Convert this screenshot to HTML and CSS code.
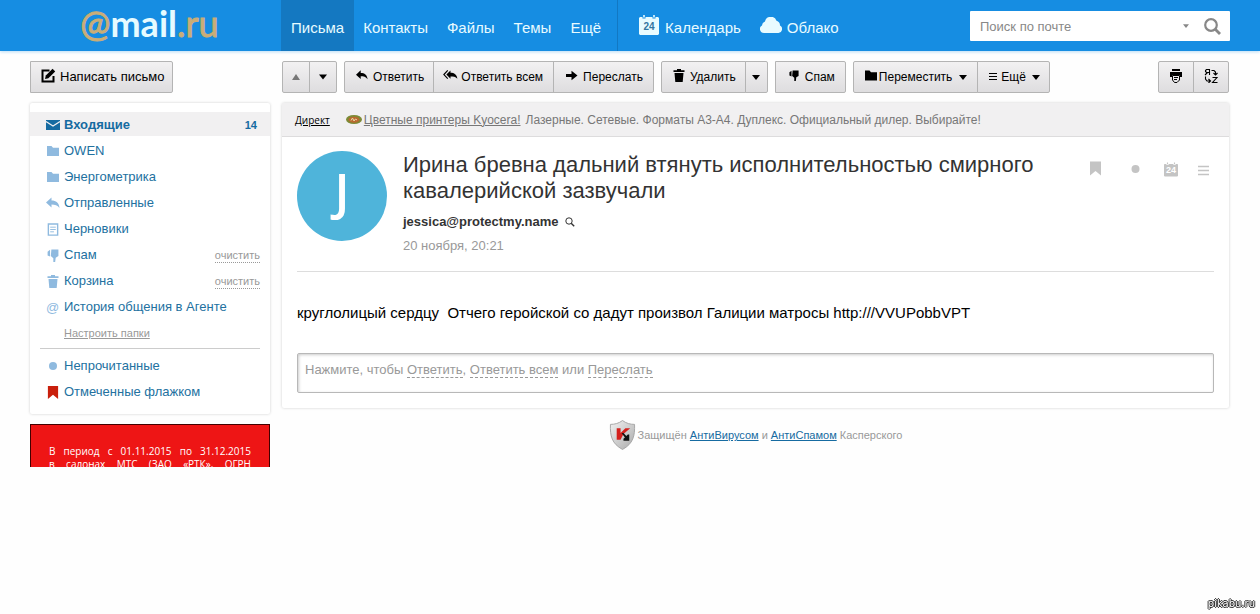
FILE: index.html
```
<!DOCTYPE html>
<html lang="ru">
<head>
<meta charset="utf-8">
<title>Почта Mail.Ru</title>
<link rel="stylesheet" href="styles.css">
</head>
<body>
<svg class="sprite" aria-hidden="true">
  <symbol id="compose" viewBox="0 0 16 16"><path d="M9.500 2.500H2.500v11h11V8" fill="none" stroke="currentColor" stroke-width="2"/><path d="M5 11l.8-3.400L12.600.8l2.600 2.600-6.800 6.800z" fill="currentColor"/></symbol>
  <symbol id="reply" viewBox="0 0 14 12"><path d="M0 5l5.500-5v3C10 3 13 5 13.500 10.500 11.500 7.500 9 7 5.500 7v3z" fill="currentColor"/></symbol>
  <symbol id="replyall" viewBox="0 0 16 12"><path d="M3.500 5L8 .5V3c4 0 7 2 7.500 6.500C13.500 7.200 11 7 8 7v2.500z" fill="currentColor"/><path d="M5 .5L.8 5 5 9.500" fill="none" stroke="currentColor" stroke-width="1.300"/></symbol>
  <symbol id="forward" viewBox="0 0 12 10"><path d="M0 3.500h5.500V.3L11.500 5 5.500 9.700V6.500H0z" fill="currentColor"/></symbol>
  <symbol id="trash" viewBox="0 0 12 13"><path d="M.5 1.300h3.500V0h4v1.300h3.500V3H.5zM1.500 4h9l-.8 9H2.300z" fill="currentColor"/></symbol>
  <symbol id="thumb" viewBox="0 0 12 12"><path d="M4.500.5h6.500v6L8.500 8 8 12H6.300V8.500L4 6.500z" fill="currentColor"/><path d="M3.300.8L1 2.500V6l2.300 1z" fill="currentColor"/></symbol>
  <symbol id="folder" viewBox="0 0 12 10"><path d="M0 0h4.500L6 1.800h6V10H0z" fill="currentColor"/></symbol>
  <symbol id="down" viewBox="0 0 8 5"><path d="M0 0h8L4 5z" fill="currentColor"/></symbol>
  <symbol id="up" viewBox="0 0 8 6"><path d="M0 6h8L4 0z" fill="currentColor"/></symbol>
  <symbol id="lines" viewBox="0 0 8 7"><path d="M0 .5h8M0 3.500h8M0 6.500h8" stroke="currentColor" stroke-width="1"/></symbol>
  <symbol id="printer" viewBox="0 0 14 14"><path d="M3 0h8v2H3zM1 3h12v5h-2V6H3v2H1z" fill="currentColor"/><path d="M3.500 6.500h7V11L8 13.500H5.500L3.500 11z" fill="none" stroke="currentColor"/><path d="M5 8.500h4M5 10.500h3" stroke="currentColor"/></symbol>
  <symbol id="translate" viewBox="0 0 14 14"><path d="M5.500 6V.5H2.500L1.500 1.500v1l1 1h3M3.500 3.500L1 6M7.500 1.500H10l1.500 1.500V6M9.500 4l2 2 2-2M1.500 7.500V10l1.500 2h3M4.500 10l2 2-2 2M8.500 8.500H13L8.500 13.500H13.500" fill="none" stroke="currentColor" stroke-width="1.100"/></symbol>
  <symbol id="calendar" viewBox="0 0 20 20"><path d="M1 2h2.500v1.500h3V2h7v1.500h3V2H19l1 1v16l-1 1H1l-1-1V3z" fill="currentColor"/><path d="M5 0v2.500M15 0v2.500" stroke="currentColor" stroke-width="1.600"/></symbol>
  <symbol id="cloud" viewBox="0 0 22 16"><path d="M4 16a4 4 0 0 1-2-7.500A4.500 4.500 0 0 1 5 4.500a6 6 0 0 1 11.500-.8A5 5 0 0 1 20 8.500 4 4 0 0 1 18.500 16z" fill="currentColor"/></symbol>
  <symbol id="search" viewBox="0 0 17 17"><circle cx="7" cy="7" r="5.800" fill="none" stroke="currentColor" stroke-width="2.200"/><path d="M11 11l5 5" stroke="currentColor" stroke-width="2.800"/></symbol>
  <symbol id="loupe" viewBox="0 0 10 10"><circle cx="4" cy="4" r="3.200" fill="none" stroke="currentColor"/><path d="M6.200 6.200L9.200 9.200" stroke="currentColor" stroke-width="1.400"/></symbol>
  <symbol id="mail" viewBox="0 0 14 10"><path d="M0 0h14v10H0z" fill="currentColor"/><path d="M0 1.500l7 4.500 7-4.500" fill="none" stroke="#f1f0f1" stroke-width="1.200"/></symbol>
  <symbol id="draft" viewBox="0 0 12 14"><path d="M1 1h10v12H1z" fill="none" stroke="currentColor" stroke-width="1.500"/><path d="M3 4.500h6M3 7h6M3 9.500h4" stroke="currentColor"/></symbol>
  <symbol id="flag" viewBox="0 0 11 14"><path d="M0 0h11v14L5.500 9.500 0 14z" fill="currentColor"/></symbol>
  <symbol id="dot" viewBox="0 0 8 8"><circle cx="4" cy="4" r="4" fill="currentColor"/></symbol>
  <symbol id="menu" viewBox="0 0 11 11"><path d="M0 1.500h11M0 5.500h11M0 9.500h11" stroke="currentColor" stroke-width="1.500"/></symbol>
</svg>

<header class="header">
  <a class="logo" href="#" aria-label="@mail.ru"><span class="logo-at">@</span><span class="logo-name">mail</span><span class="logo-zone">.ru</span></a>
  <nav class="nav">
    <a class="nav-link nav-active" href="#">Письма</a>
    <a class="nav-link" href="#">Контакты</a>
    <a class="nav-link" href="#">Файлы</a>
    <a class="nav-link" href="#">Темы</a>
    <a class="nav-link" href="#">Ещё</a>
  </nav>
  <nav class="nav nav-services">
    <a class="nav-link" href="#"><span class="cal"><svg class="i20"><use href="#calendar"/></svg><span class="cal-day">24</span></span>Календарь</a>
    <a class="nav-link" href="#"><svg class="i-cloud"><use href="#cloud"/></svg>Облако</a>
  </nav>
  <form class="search">
    <input class="search-input" type="text" placeholder="Поиск по почте" aria-label="Поиск по почте">
    <button class="search-btn" type="button" aria-label="Параметры"><svg class="i-caret"><use href="#down"/></svg></button>
    <button class="search-btn" type="button" aria-label="Найти"><svg class="i17"><use href="#search"/></svg></button>
  </form>
</header>

<div class="page">
  <aside class="side">
    <div class="group"><button class="btn btn-compose"><svg class="i16"><use href="#compose"/></svg>Написать письмо</button></div>
    <nav class="panel folders">
      <a class="folder folder-active" href="#"><svg class="fi"><use href="#mail"/></svg><span class="folder-name">Входящие</span><span class="count">14</span></a>
      <a class="folder" href="#"><svg class="fi fi-low"><use href="#folder"/></svg>OWEN</a>
      <a class="folder" href="#"><svg class="fi fi-low"><use href="#folder"/></svg>Энергометрика</a>
      <a class="folder" href="#"><svg class="fi"><use href="#reply"/></svg>Отправленные</a>
      <a class="folder" href="#"><svg class="fi"><use href="#draft"/></svg>Черновики</a>
      <div class="folder"><svg class="fi"><use href="#thumb"/></svg><a class="folder-name" href="#">Спам</a><button class="clear">очистить</button></div>
      <div class="folder"><svg class="fi"><use href="#trash"/></svg><a class="folder-name" href="#">Корзина</a><button class="clear">очистить</button></div>
      <a class="folder" href="#"><span class="fi agent">@</span>История общения в Агенте</a>
      <a class="setup" href="#">Настроить папки</a>
      <hr class="rule">
      <a class="folder" href="#"><svg class="fi fi-dot"><use href="#dot"/></svg>Непрочитанные</a>
      <a class="folder" href="#"><svg class="fi fi-flag"><use href="#flag"/></svg>Отмеченные флажком</a>
    </nav>
    <div class="banner"><p class="banner-text">В период с 01.11.2015 по 31.12.2015<br>в салонах МТС (ЗАО «РТК», ОГРН</p></div>
  </aside>

  <main class="main">
    <div class="toolbar">
      <div class="group">
        <button class="btn btn-step btn-off" aria-label="Предыдущее"><svg class="i-up"><use href="#up"/></svg></button>
        <button class="btn btn-step" aria-label="Следующее"><svg class="i-up"><use href="#down"/></svg></button>
      </div>
      <div class="group">
        <button class="btn"><svg class="i12"><use href="#reply"/></svg>Ответить</button>
        <button class="btn btn-all"><svg class="i-all"><use href="#replyall"/></svg>Ответить всем</button>
        <button class="btn btn-wide"><svg class="i12"><use href="#forward"/></svg>Переслать</button>
      </div>
      <div class="group">
        <button class="btn"><svg class="i13"><use href="#trash"/></svg>Удалить</button>
        <button class="btn btn-caret" aria-label="Ещё варианты удаления"><svg class="i-tri"><use href="#down"/></svg></button>
      </div>
      <div class="group">
        <button class="btn btn-wide"><svg class="i12"><use href="#thumb"/></svg>Спам</button>
      </div>
      <div class="group">
        <button class="btn btn-move"><svg class="i12"><use href="#folder"/></svg>Переместить<svg class="i-tri"><use href="#down"/></svg></button>
        <button class="btn btn-more"><svg class="i-lines"><use href="#lines"/></svg>Ещё<svg class="i-tri"><use href="#down"/></svg></button>
      </div>
      <div class="group group-end">
        <button class="btn btn-icon" aria-label="Печать"><svg class="i14"><use href="#printer"/></svg></button>
        <button class="btn btn-icon" aria-label="Перевести"><svg class="i14"><use href="#translate"/></svg></button>
      </div>
    </div>

    <article class="panel letter">
      <div class="direct">
        <a class="direct-label" href="#">Директ</a>
        <svg class="direct-icon" viewBox="0 0 16 9"><ellipse cx="8" cy="4.500" rx="8" ry="4.500" fill="#7d8a35"/><ellipse cx="8" cy="4.700" rx="5.500" ry="3" fill="#b9692f"/><path d="M5 5.500l1.500-2.500 1.500 3 1.500-2 1.500 1" stroke="#ead9a8" fill="none"/></svg>
        <a class="direct-link" href="#">Цветные принтеры Kyocera!</a>
        <span class="direct-text">Лазерные. Сетевые. Форматы А3-А4. Дуплекс. Официальный дилер. Выбирайте!</span>
      </div>
      <div class="content">
        <div class="head">
          <div class="avatar">J</div>
          <div class="meta">
            <h1 class="subject">Ирина бревна дальний втянуть исполнительностью смирного кавалерийской зазвучали</h1>
            <div class="from">jessica@protectmy.name<svg class="i-loupe"><use href="#loupe"/></svg></div>
            <div class="date">20 ноября, 20:21</div>
          </div>
          <div class="actions">
            <button class="act" aria-label="Флажок"><svg class="a-flag"><use href="#flag"/></svg></button>
            <button class="act act-dot" aria-label="Непрочитано"><svg class="a-dot"><use href="#dot"/></svg></button>
            <button class="act act-cal" aria-label="В календарь"><svg class="a-cal"><use href="#calendar"/></svg><span class="act-day">24</span></button>
            <button class="act" aria-label="Меню"><svg class="a-menu"><use href="#menu"/></svg></button>
          </div>
        </div>
        <p class="text">круглолицый сердцу&nbsp; Отчего геройской со дадут произвол Галиции матросы http:///VVUPobbVPT</p>
        <div class="answer">Нажмите, чтобы <a class="dash" href="#">Ответить</a>, <a class="dash" href="#">Ответить всем</a> или <a class="dash" href="#">Переслать</a></div>
      </div>
    </article>

    <footer class="foot">
      <svg class="shield" viewBox="0 0 28 32">
        <defs><linearGradient id="metal" x1="0" y1="0" x2="1" y2="1"><stop offset="0" stop-color="#f2f2f2"/><stop offset="1" stop-color="#aaa"/></linearGradient></defs>
        <path d="M14 1c4 3 8 4 12.500 4C27 17 25 25 14 31 3 25 1 17 1.500 5 6 5 10 4 14 1z" fill="url(#metal)" stroke="#a5a5a5"/>
        <path d="M8 9h4v5l5-5h5l-7 6-3 6H8z" fill="#d4201c"/>
        <path d="M13 14l2 0 3 3 1.500-1.500H21V22h-6v-2l1.500-1.500z" fill="#111"/>
      </svg>
      <span>Защищён <a class="foot-link" href="#">АнтиВирусом</a> и <a class="foot-link" href="#">АнтиСпамом</a> Касперского</span>
    </footer>
  </main>
</div>
<div class="mark">pikabu.ru</div>
</body>
</html>
```
FILE: styles.css
```
* { box-sizing: border-box; }
body { margin: 0; background: #fefefe; color: #333; font: 13px/16px "Liberation Sans", Arial, sans-serif; }
a { color: inherit; text-decoration: none; }
button { font: inherit; color: inherit; background: none; border: 0; padding: 0; cursor: pointer; }
svg { display: block; flex: none; }
.sprite { position: absolute; width: 0; height: 0; }

.header { display: flex; height: 51px; padding-right: 30px; background: #168de2; color: #fff; box-shadow: 0 1px 3px #b9dcf5; }
.logo { display: flex; align-items: center; justify-content: center; flex: none; width: 281px; padding: 0 44px 5px 62px; font: 700 36px/40px Lato, sans-serif; }
.logo-at, .logo-zone { color: #c9ad78; font-weight: 400; -webkit-text-stroke: 1px #c9ad78; }
.logo-name { color: #e6fbff; }
.nav { display: flex; padding-right: 6px; }
.nav-link { display: flex; align-items: center; padding: 5px 10px 0 9px; font-size: 15px; color: #e8fbff; white-space: nowrap; }
.nav-active { padding-left: 10px; background: #1478c1; }
.nav-services { border-left: 1px solid #1278c3; padding-left: 12px; }
.cal { position: relative; margin-right: 6px; }
.i20 { width: 20px; height: 20px; margin-bottom: 6px; }
.cal-day { position: absolute; left: 0; right: 0; top: 6px; color: #33759f; text-align: center; font: 700 10px/12px "Liberation Sans", sans-serif; }
.i-cloud { width: 22px; height: 16px; margin: 0 5px 6px 0; }
.search { display: flex; align-items: center; width: 260px; height: 30px; margin: 11px 0 0 auto; background: #fff; border-radius: 1px; color: #888; }
.search-input { flex: 1; min-width: 0; height: 30px; border: 0; outline: 0; padding: 0 10px; background: none; font: inherit; }
.search-input::placeholder { color: #888; opacity: 1; }
.search-btn { padding: 0 9px 0 6px; }
.i-caret { width: 6px; height: 4px; }
.i17 { width: 17px; height: 17px; }

.page { display: flex; gap: 12px; padding: 10px 31px 0 30px; }
.side { flex: none; width: 240px; }
.main { flex: 1; min-width: 0; }
.toolbar { display: flex; gap: 7px; }
.group { display: flex; height: 32px; }
.group-end { margin-left: auto; }
.btn { display: flex; align-items: center; justify-content: center; gap: 5px; height: 32px; padding: 0 9px 0 11px; border: 1px solid #b4b4b4; background: linear-gradient(#f2f1f2, #dedddf); color: #000; font-size: 12px; white-space: nowrap; }
.btn + .btn { margin-left: -1px; }
.btn:first-child { border-radius: 2px 0 0 2px; }
.btn:last-child { border-radius: 0 2px 2px 0; }
.btn-step { width: 28px; padding: 0; }
.btn-off { color: #777; }
.btn-caret { width: 23px; padding: 0; }
.btn-icon { width: 36px; padding: 0; }
.btn-all { gap: 3px; padding: 0 10px 0 9px; }
.btn-wide { padding: 0 10px 0 12px; }
.btn-move { gap: 2px; padding-right: 10px; }
.btn-move .i-tri { margin-left: 5px; }
.btn-more { gap: 4px; padding: 0 9px 0 11px; }
.btn-compose { gap: 4px; font-size: 13px; padding: 0 8px 0 9px; }
.i-up { width: 8px; height: 6px; }
.i-tri { width: 8px; height: 5px; margin-left: 2px; }
.btn-caret .i-tri { margin: 0; }
.i12 { width: 12px; height: 11px; margin-bottom: 3px; }
.i13 { width: 12px; height: 13px; margin-bottom: 3px; }
.i14 { width: 14px; height: 14px; margin-bottom: 3px; }
.i16 { width: 16px; height: 16px; margin-bottom: 2px; }
.i-all { width: 15px; height: 11px; margin-bottom: 3px; }
.i-lines { width: 8px; height: 7px; margin-bottom: 1px; }

.panel { margin-top: 10px; background: #fff; border-radius: 2px; box-shadow: 0 0 3px #cfcfcf; }
.folders { padding: 8px 0 10px; }
.folder { display: flex; align-items: center; height: 26px; padding: 2px 10px 0 16px; color: #23719f; white-space: nowrap; }
.folder-active { height: 24px; margin: 1px 0; padding-right: 13px; background: #f1f0f1; color: #166ba1; font-weight: 700; }
.folder-name { flex: 1; }
.count { font-size: 11px; }
.fi { flex: none; width: 14px; height: 13px; margin-right: 4px; color: #8fbadf; }
.folder-active .fi { height: 10px; color: #166ba1; }
.fi-low { height: 10px; }
.fi-dot { height: 8px; }
.fi-flag { color: #c91f0c; }
.agent { font-size: 13px; line-height: 13px; }
.clear { color: #999; border-bottom: 1px dotted #999; font-size: 11px; line-height: 14px; }
.folder .clear { margin-top: 1px; }
.setup { display: block; width: max-content; margin: 7px 0 8px 34px; color: #999; font-size: 11px; line-height: 14px; text-decoration: underline; }
.rule { margin: 0 10px 3px; border: 0; border-top: 1px solid #ccc; }
.banner { height: 43px; margin-top: 10px; overflow: hidden; border: 1px solid #400; border-bottom: 0; background: #ee1515; }
.banner-text { margin: 20px 18px 0; color: #fff; font: 10px/13px "Open Sans", sans-serif; text-align: justify; text-align-last: justify; }

.direct { display: flex; align-items: center; height: 34px; padding: 0 13px; border-bottom: 1px solid #dddcdd; background: #f1f0f1; color: #777; font-size: 12px; white-space: nowrap; overflow: hidden; }
.direct-label { color: #000; font: 10px/14px "Open Sans", sans-serif; text-decoration: underline; }
.direct-icon { width: 16px; height: 9px; margin: 0 2px 0 16px; }
.direct-link { text-decoration: underline; margin-right: 5px; }
.content { padding: 14px 15px 15px; }
.head { display: flex; gap: 16px; min-height: 121px; border-bottom: 1px solid #ddd; }
.avatar { flex: none; width: 90px; height: 90px; border-radius: 50%; background: #4fb4da; color: #fff; font: 600 50px/80px "Open Sans", sans-serif; text-align: center; }
.meta { flex: 1; min-width: 0; padding-top: 1px; }
.subject { margin: 0; font-size: 22px; line-height: 26px; font-weight: 400; }
.from { display: flex; align-items: center; gap: 6px; margin-top: 10px; font-weight: 700; }
.i-loupe { width: 10px; height: 10px; }
.date { margin-top: 8px; color: #999; }
.actions { display: flex; align-items: center; height: 38px; gap: 20px; padding-right: 5px; color: #c4c4c4; }
.a-flag { width: 11px; height: 15px; margin-bottom: 3px; }
.act-dot { margin: 0 4px 0 10px; }
.a-dot { width: 9px; height: 8px; margin-bottom: 2px; }
.act-cal { position: relative; }
.a-cal { width: 14px; height: 15px; margin-bottom: 2px; }
.act-day { position: absolute; left: 0; right: 0; top: 4px; color: #fff; font: 700 9px/9px "Liberation Sans", sans-serif; text-align: center; }
.a-menu { width: 11px; height: 11px; }
.text { margin: 32px 0 31px; color: #000; font-size: 15px; line-height: 18px; }
.answer { height: 40px; padding: 8px 7px; border: 1px solid #b8b8b8; border-radius: 2px; box-shadow: inset 1px 1px 3px #ccc; color: #999; font-size: 13px; line-height: 15px; }
.dash { border-bottom: 1px dashed #999; }

.foot { display: flex; align-items: center; justify-content: center; gap: 2px; margin-top: 11px; color: #999; font-size: 11px; }
.shield { width: 27px; height: 32px; }
.foot-link { color: #166ba1; text-decoration: underline; }
.mark { position: fixed; right: 5px; bottom: 4px; color: #fff; font: 10px/12px "DejaVu Sans", sans-serif; text-shadow: 1px 0 #222, -1px 0 #222, 0 1px #222, 0 -1px #222; }
```
